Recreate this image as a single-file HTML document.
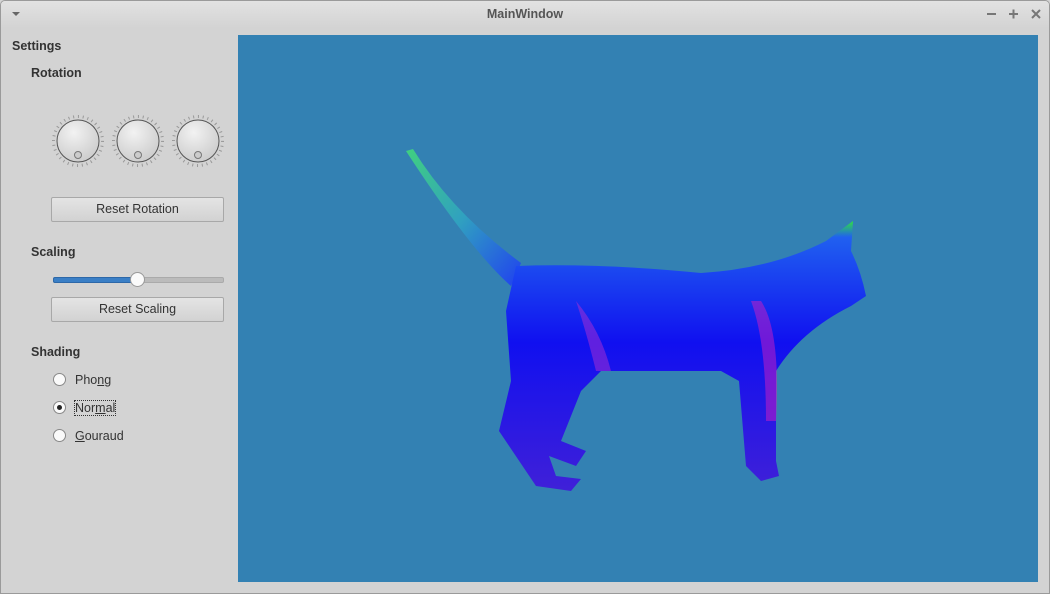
<!DOCTYPE html>
<html><head><style>
body{margin:0;width:1050px;height:594px;overflow:hidden;background:#d4d4d4;font-family:"Liberation Sans",sans-serif;}
.win{position:absolute;left:0;top:0;width:1048px;height:592px;border:1px solid #9a9a9a;border-radius:5px 5px 0 0;background:#d3d3d3;overflow:hidden}
.title{position:absolute;left:0;top:0;width:100%;height:27px;background:linear-gradient(#e2e2e2,#d3d3d3);text-align:center;font-size:12.5px;color:#555;line-height:27px;font-weight:bold}
.vp{position:absolute;left:237px;top:34px;width:800px;height:547px;background:#3381b3}
.lbl{position:absolute;font-size:12.5px;font-weight:bold;color:#333}
.btn{position:absolute;left:50px;width:171px;height:23px;border:1px solid #a8a8a8;border-radius:2px;background:linear-gradient(#e4e4e4,#d2d2d2);font-size:12.5px;color:#333;text-align:center;line-height:23px}
.rad{position:absolute;left:52px;width:11px;height:11px;border:1px solid #888;border-radius:50%;background:#fafafa}
.rt{position:absolute;left:74px;font-size:12.5px;color:#333}
</style></head><body><div class="win">
<div class="title">MainWindow</div>
<div style="position:absolute;left:11px;top:11px;width:0;height:0;border-left:4px solid transparent;border-right:4px solid transparent;border-top:4px solid #666"></div>
<svg style="position:absolute;left:980px;top:5px" width="65" height="16">
<path d="M6 8h9M28 8h9M32.5 3.5v9M51 4l8 8M59 4l-8 8" stroke="#777" stroke-width="2"/></svg>
<div class="lbl" style="left:11px;top:38px">Settings</div>
<div class="lbl" style="left:30px;top:65px">Rotation</div>
<svg style="position:absolute;left:47px;top:110px" width="180" height="60">
<defs><radialGradient id="k" cx="0.4" cy="0.3" r="0.8"><stop offset="0" stop-color="#f2f2f2"/><stop offset="1" stop-color="#c8c8c8"/></radialGradient></defs>
<g id="d" transform="translate(30,30)">
<circle r="24.5" fill="none" stroke="#999" stroke-width="3" stroke-dasharray="1 3.8"/>
<circle r="21" fill="url(#k)" stroke="#555"/>
<circle cy="14" r="3.5" fill="#ccc" stroke="#777"/></g>
<use href="#d" x="60"/><use href="#d" x="120"/>
</svg>
<div class="btn" style="top:196px">Reset Rotation</div>
<div class="lbl" style="left:30px;top:244px">Scaling</div>
<div style="position:absolute;left:52px;top:276px;width:169px;height:4px;border-radius:2px;background:#bbb;border:1px solid #aaa"></div>
<div style="position:absolute;left:52px;top:276px;width:84px;height:4px;border-radius:2px;background:#3a7fc6;border:1px solid #2d68a8"></div>
<div style="position:absolute;left:129px;top:271px;width:13px;height:13px;border-radius:50%;background:#fafafa;border:1px solid #999"></div>
<div class="btn" style="top:296px">Reset Scaling</div>
<div class="lbl" style="left:30px;top:344px">Shading</div>
<div class="rad" style="top:372px"></div><div class="rt" style="top:372px">Pho<u>n</u>g</div>
<div class="rad" style="top:400px"><div style="margin:3px;width:5px;height:5px;border-radius:50%;background:#222"></div></div><div class="rt" style="top:400px;outline:1px dotted #333">Nor<u>m</u>al</div>
<div class="rad" style="top:428px"></div><div class="rt" style="top:428px"><u>G</u>ouraud</div>
<div class="vp">
<svg width="800" height="547" viewBox="237 34 800 547">
<defs>
<linearGradient id="b" x1="0" y1="0" x2="0" y2="1"><stop offset="0" stop-color="#30e040"/><stop offset="0.06" stop-color="#2060f0"/><stop offset="0.45" stop-color="#1010f0"/><stop offset="1" stop-color="#4020d8"/></linearGradient>
<linearGradient id="t" x1="0" y1="0" x2="1" y2="1"><stop offset="0" stop-color="#40d080"/><stop offset="0.5" stop-color="#30a0c0"/><stop offset="1" stop-color="#2040f0"/></linearGradient>
</defs>
<path d="M405 150 L412 148 Q450 210 520 262 L510 285 Q470 250 405 150Z" fill="url(#t)"/>
<path d="M515 265 Q600 262 700 272 Q770 268 825 240 L852 220 L850 250 Q860 270 865 295 L850 305 Q800 330 775 370 L775 460 L778 475 L760 480 L745 465 L738 380 L720 370 L600 370 L580 390 L560 440 L585 450 L575 465 L548 455 L555 475 L580 478 L570 490 L535 485 L498 430 L510 380 L505 310 Z" fill="url(#b)"/>
<path d="M575 300 Q600 330 610 370 L595 370 Q585 330 575 300Z" fill="#b030d0" opacity="0.5"/>
<path d="M760 300 Q780 330 775 420 L765 420 Q765 340 750 300Z" fill="#d020c0" opacity="0.5"/>
</svg></div>
</div></body></html>
